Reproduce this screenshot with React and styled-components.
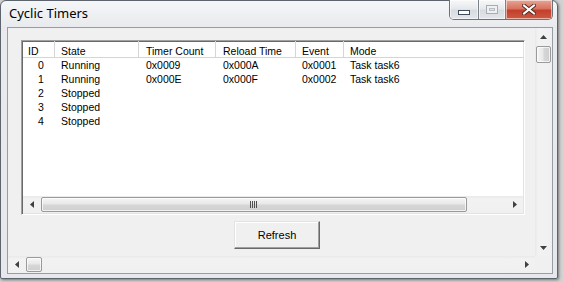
import React from 'react'
import styled, { createGlobalStyle } from 'styled-components'

const GlobalStyle = createGlobalStyle`
  html, body {
    margin: 0;
    padding: 0;
  }
  body {
    width: 563px;
    height: 282px;
    overflow: hidden;
    background: #d2d2d2;
    font-family: "Liberation Sans", Arial, sans-serif;
  }
`

const Desktop = styled.div`
  width: 563px;
  height: 282px;
  display: flex;
  align-items: flex-start;
`

const Window = styled.div`
  box-sizing: border-box;
  width: 558px;
  height: 279px;
  border: 1px solid #5d646d;
  border-radius: 6px 6px 2px 2px;
  background: linear-gradient(#f5f6f8, #e8eaed 26px, #e6e8eb);
  box-shadow: 1px 1px 3px rgba(0, 0, 0, 0.45);
  display: flex;
  flex-direction: column;
`

const TitleBar = styled.div`
  height: 26px;
  display: flex;
  align-items: flex-start;
  padding: 0 4px 0 8px;
`

const Title = styled.div`
  padding-top: 4px;
  font-family: "Noto Sans", "Open Sans", sans-serif;
  font-size: 13px;
  line-height: 16px;
  color: #000;
`

const Caption = styled.div`
  display: flex;
  margin-left: auto;
  margin-top: -1px;
  height: 19px;
  border: 1px solid #6b727a;
  border-top: none;
  border-radius: 0 0 5px 5px;
  overflow: hidden;
`

const CaptionButton = styled.div`
  box-sizing: border-box;
  width: ${(p) => p.$w}px;
  height: 100%;
  display: flex;
  justify-content: center;
  align-items: ${(p) => (p.$low ? 'flex-end' : 'center')};
  padding-bottom: ${(p) => (p.$low ? '4px' : '0')};
  background: ${(p) =>
    p.$close
      ? 'linear-gradient(#e7a595, #d8735f 45%, #c2402b 55%, #cf5840)'
      : 'linear-gradient(#f7f8f9, #e6e9ec 45%, #d8dce1 55%, #e2e5e9)'};
  box-shadow: inset 0 0 0 1px rgba(255, 255, 255, 0.55);
  & + & {
    border-left: 1px solid #7a8189;
  }
`

const MinGlyph = styled.div`
  width: 10px;
  height: 3px;
  background: #fff;
  border: 1px solid #3f4c5c;
`

const MaxGlyph = styled.div`
  box-sizing: border-box;
  width: 12px;
  height: 9px;
  border: 1px solid #a7adb4;
  box-shadow: inset 0 0 0 2px #eef0f2, inset 0 0 0 3px #b9bec4;
`

const Client = styled.div`
  flex: 1;
  margin: 0 4px 4px 6px;
  border: 1px solid #979da5;
  background: #f0f0f0;
  display: grid;
  grid-template-columns: 527px 17px;
  grid-template-rows: 228px 17px;
`

const Main = styled.div`
  padding: 12px 0 0 13px;
  display: flex;
  flex-direction: column;
  align-items: flex-start;
`

const ListView = styled.div`
  box-sizing: border-box;
  width: 504px;
  height: 175px;
  background: #fff;
  border: 1px solid;
  border-color: #a0a0a0 #ffffff #ffffff #a0a0a0;
  box-shadow: inset 1px 1px 0 #696969, inset -1px -1px 0 #e3e3e3;
  display: flex;
  flex-direction: column;
  font-size: 10.5px;
  color: #000;
`

const Header = styled.div`
  display: flex;
  height: 16px;
  margin-left: 1px;
  border-bottom: 1px solid #d5d5d5;
`

const HeaderCell = styled.div`
  box-sizing: border-box;
  flex: ${(p) => (p.$w ? `0 0 ${p.$w}px` : '1')};
  padding: 4px 0 0 ${(p) => p.$pad}px;
  line-height: 12px;
  border-right: ${(p) => (p.$w ? '1px solid #d5d5d5' : 'none')};
  white-space: nowrap;
`

const Row = styled.div`
  display: flex;
  height: 14px;
  margin-left: 1px;
`

const Cell = styled.div`
  box-sizing: border-box;
  flex: ${(p) => (p.$w ? `0 0 ${p.$w}px` : '1')};
  padding-left: ${(p) => p.$pad}px;
  line-height: 14px;
  white-space: nowrap;
`

const HScroll = styled.div`
  display: flex;
  height: 17px;
  margin: auto 1px 1px 1px;
  background: linear-gradient(#e9e9e9, #f2f2f2 3px, #f0f0f0);
`

const VScroll = styled.div`
  display: flex;
  flex-direction: column;
  background: linear-gradient(90deg, #e9e9e9, #f2f2f2 3px, #f0f0f0);
`

const WinHScroll = styled(HScroll)`
  margin: 0;
`

const Corner = styled.div`
  background: #f0f0f0;
`

const ArrowButton = styled.div`
  flex: 0 0 17px;
  height: 17px;
  display: flex;
  align-items: center;
  justify-content: center;
`

const Track = styled.div`
  flex: 1;
`

const HThumb = styled.div`
  box-sizing: border-box;
  flex: 0 0 ${(p) => p.$len}px;
  margin: 0 ${(p) => p.$after}px 0 ${(p) => p.$before}px;
  height: 15px;
  align-self: center;
  border: 1px solid #9a9a9a;
  border-radius: 2px;
  background: linear-gradient(#f6f6f6, #e8e8e8 45%, #d6d6d6 55%, #cfcfcf);
  box-shadow: inset 0 0 0 1px rgba(255, 255, 255, 0.7);
  display: flex;
  align-items: center;
  justify-content: center;
`

const VThumb = styled.div`
  box-sizing: border-box;
  height: 17px;
  width: 15px;
  margin: 1px 0 0 1px;
  border: 1px solid #9a9a9a;
  border-radius: 2px;
  background: linear-gradient(90deg, #f6f6f6, #e8e8e8 45%, #d6d6d6 55%, #cfcfcf);
  box-shadow: inset 0 0 0 1px rgba(255, 255, 255, 0.7);
`

const PushButton = styled.button`
  box-sizing: border-box;
  width: 86px;
  height: 28px;
  margin: 6px 0 0 213px;
  padding: 0;
  font-family: "Liberation Sans", Arial, sans-serif;
  font-size: 11px;
  color: #000;
  background: #f0f0f0;
  border: 1px solid;
  border-color: #e3e3e3 #696969 #696969 #e3e3e3;
  box-shadow: inset -1px -1px 0 #a0a0a0, inset 1px 1px 0 #ffffff;
`

const Arrow = ({ dir }) => {
  const vert = dir === 'up' || dir === 'down'
  const pts = {
    left: '4,0 4,7 0,3.5',
    right: '0,0 0,7 4,3.5',
    up: '0,4 7,4 3.5,0',
    down: '0,0 7,0 3.5,4',
  }[dir]
  return (
    <svg width={vert ? 7 : 4} height={vert ? 4 : 7} viewBox={vert ? '0 0 7 4' : '0 0 4 7'}>
      <polygon points={pts} fill="#404040" />
    </svg>
  )
}

const Grip = () => (
  <svg width="8" height="7" viewBox="0 0 8 7">
    {[0, 2, 4, 6].map((x) => (
      <rect key={x} x={x} y="0" width="1" height="7" fill="#505050" />
    ))}
  </svg>
)

const CloseGlyph = () => (
  <svg width="14" height="11" viewBox="0 0 14 11">
    <path d="M2 1.5 L12 9.5 M12 1.5 L2 9.5" stroke="#5a2a20" strokeWidth="4" strokeLinecap="square" />
    <path d="M2 1.5 L12 9.5 M12 1.5 L2 9.5" stroke="#fff" strokeWidth="2" strokeLinecap="square" />
  </svg>
)

const columns = [
  { key: 'id', label: 'ID', width: 32, headPad: 5, pad: 15 },
  { key: 'state', label: 'State', width: 84, headPad: 6, pad: 6 },
  { key: 'count', label: 'Timer Count', width: 77, headPad: 7, pad: 7 },
  { key: 'reload', label: 'Reload Time', width: 80, headPad: 7, pad: 7 },
  { key: 'event', label: 'Event', width: 48, headPad: 6, pad: 6 },
  { key: 'mode', label: 'Mode', width: 0, headPad: 6, pad: 6 },
]

const timers = [
  { id: 0, state: 'Running', count: '0x0009', reload: '0x000A', event: '0x0001', mode: 'Task task6' },
  { id: 1, state: 'Running', count: '0x000E', reload: '0x000F', event: '0x0002', mode: 'Task task6' },
  { id: 2, state: 'Stopped' },
  { id: 3, state: 'Stopped' },
  { id: 4, state: 'Stopped' },
]

const App = () => {
  return (
    <Desktop>
      <GlobalStyle />
      <Window>
        <TitleBar>
          <Title>Cyclic Timers</Title>
          <Caption>
            <CaptionButton $w={28} $low>
              <MinGlyph />
            </CaptionButton>
            <CaptionButton $w={27}>
              <MaxGlyph />
            </CaptionButton>
            <CaptionButton $w={47} $close>
              <CloseGlyph />
            </CaptionButton>
          </Caption>
        </TitleBar>
        <Client>
          <Main>
            <ListView>
              <Header>
                {columns.map((c) => (
                  <HeaderCell key={c.key} $w={c.width} $pad={c.headPad}>
                    {c.label}
                  </HeaderCell>
                ))}
              </Header>
              {timers.map((t) => (
                <Row key={t.id}>
                  {columns.map((c) => (
                    <Cell key={c.key} $w={c.width} $pad={c.pad}>
                      {t[c.key]}
                    </Cell>
                  ))}
                </Row>
              ))}
              <HScroll>
                <ArrowButton>
                  <Arrow dir="left" />
                </ArrowButton>
                <HThumb $len={426} $before={1} $after={0}>
                  <Grip />
                </HThumb>
                <Track />
                <ArrowButton>
                  <Arrow dir="right" />
                </ArrowButton>
              </HScroll>
            </ListView>
            <PushButton type="button">Refresh</PushButton>
          </Main>
          <VScroll>
            <ArrowButton>
              <Arrow dir="up" />
            </ArrowButton>
            <VThumb />
            <Track />
            <ArrowButton>
              <Arrow dir="down" />
            </ArrowButton>
          </VScroll>
          <WinHScroll>
            <ArrowButton>
              <Arrow dir="left" />
            </ArrowButton>
            <HThumb $len={16} $before={1} $after={0} />
            <Track />
            <ArrowButton>
              <Arrow dir="right" />
            </ArrowButton>
          </WinHScroll>
          <Corner />
        </Client>
      </Window>
    </Desktop>
  )
}

export default App
